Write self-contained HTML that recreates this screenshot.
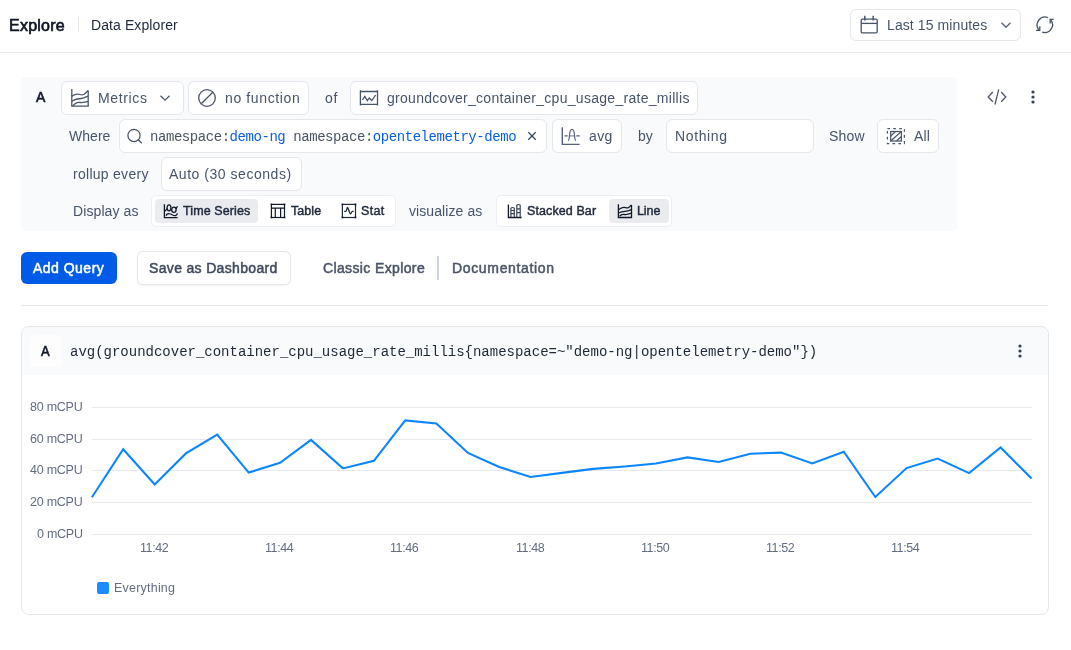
<!DOCTYPE html>
<html><head><meta charset="utf-8"><style>
html,body{margin:0;padding:0;background:#fff;width:1071px;height:650px;overflow:hidden;position:relative}
.t{position:absolute;white-space:pre;will-change:transform}
.b{position:absolute;box-sizing:border-box}
.b{box-sizing:content-box}
.i{position:absolute;overflow:visible}
</style></head><body>
<div class="t" style="left:9.20px;top:18px;font-family:'Liberation Sans', sans-serif;font-weight:400;font-size:16px;line-height:16px;color:#0e1424;letter-spacing:0.233px;-webkit-text-stroke:0.65px #0e1424">Explore</div>
<div class="b" style="left:78px;top:17px;width:0px;height:15px;background:#e5e7eb;border:none;border-radius:0px;width:1px"></div>
<div class="t" style="left:90.80px;top:18px;font-family:'Liberation Sans', sans-serif;font-weight:400;font-size:14px;line-height:14px;color:#1e293b;letter-spacing:0.095px;">Data Explorer</div>
<div class="b" style="left:0px;top:52px;width:1071px;height:0px;background:#e5e7eb;border:none;border-radius:0px;height:1px"></div>
<div class="b" style="left:850px;top:9px;width:169px;height:30px;background:#fff;border:1px solid #e4e7ec;border-radius:6px;"></div>
<svg class="i" style="left:859px;top:15px;" width="20" height="20" viewBox="0 0 20 20"><g fill="none" stroke="#475569" stroke-width="1.3"><rect x="2.2" y="4.2" width="16" height="13.6" rx="1.2"/><path d="M2.2 8.4H18.2"/><path d="M5.8 0.8V5.4M14.2 0.8V5.4" stroke-width="1.5"/></g></svg>
<div class="t" style="left:887.40px;top:18px;font-family:'Liberation Sans', sans-serif;font-weight:400;font-size:14px;line-height:14px;color:#475569;letter-spacing:0.099px;">Last 15 minutes</div>
<svg class="i" style="left:1000px;top:21px;" width="12" height="8" viewBox="0 0 12 8"><path d="M1.5 1.8L6 6.2L10.5 1.8" fill="none" stroke="#5b6779" stroke-width="1.4"/></svg>
<svg class="i" style="left:1035px;top:15px;" width="20" height="20" viewBox="0 0 20 20"><g fill="none" stroke="#475569" stroke-width="1.3"><path d="M12.9 2.6A7.9 7.9 0 0 0 3.8 14.8"/><path d="M1.1 15.4H4.8V11.3"/><path d="M7.2 17.2A7.9 7.9 0 0 0 15.8 4.8"/><path d="M18.7 4.4H15.2V8.5"/></g></svg>
<div class="b" style="left:21px;top:77px;width:936px;height:154px;background:#f8fafc;border:none;border-radius:4px;"></div>
<div class="t" style="left:35.90px;top:90px;font-family:'Liberation Sans', sans-serif;font-weight:400;font-size:14px;line-height:14px;color:#111827;letter-spacing:0.000px;-webkit-text-stroke:0.60px #111827">A</div>
<div class="b" style="left:61px;top:81px;width:121px;height:32px;background:#fff;border:1px solid #e4e7ec;border-radius:6px;"></div>
<svg class="i" style="left:70px;top:88px;" width="20" height="20" viewBox="0 0 20 20"><g fill="none" stroke="#4a5568" stroke-width="1.3"><path d="M1.8 1V18.2H18.2V2.5"/><path d="M1.8 8.2C5 6 7 5.5 10 6.5S14 6.8 18.2 2.5"/><path d="M1.8 13.3C5 11 8 10.5 11 10.5S15 9 18.2 8.2"/><path d="M2.8 18.2C5 15 7 14 10 14.5S15 14 18.2 13.3"/></g></svg>
<div class="t" style="left:98.00px;top:91px;font-family:'Liberation Sans', sans-serif;font-weight:400;font-size:14px;line-height:14px;color:#475569;letter-spacing:0.646px;">Metrics</div>
<svg class="i" style="left:159px;top:94px;" width="12" height="8" viewBox="0 0 12 8"><path d="M1.5 1.8L6 6.2L10.5 1.8" fill="none" stroke="#4a5568" stroke-width="1.25"/></svg>
<div class="b" style="left:188px;top:81px;width:119px;height:32px;background:#fff;border:1px solid #e4e7ec;border-radius:6px;"></div>
<svg class="i" style="left:197px;top:88px;" width="20" height="20" viewBox="0 0 20 20"><g fill="none" stroke="#4a5568" stroke-width="1.3"><circle cx="10" cy="10" r="8.3"/><path d="M4.2 15.8L15.8 4.2"/></g></svg>
<div class="t" style="left:224.70px;top:91px;font-family:'Liberation Sans', sans-serif;font-weight:400;font-size:14px;line-height:14px;color:#475569;letter-spacing:0.620px;">no function</div>
<div class="t" style="left:324.70px;top:91px;font-family:'Liberation Sans', sans-serif;font-weight:400;font-size:14px;line-height:14px;color:#475569;letter-spacing:0.750px;">of</div>
<div class="b" style="left:350px;top:81px;width:346px;height:32px;background:#fff;border:1px solid #e4e7ec;border-radius:6px;"></div>
<svg class="i" style="left:358px;top:89px;" width="22" height="18" viewBox="0 0 22 18"><g fill="none" stroke="#475569" stroke-width="1.3"><path d="M2.4 1.2V16.5M19.5 1.2V16.5"/><path d="M2.4 2.5H19.5M2.4 15.3H19.5"/><path d="M4.4 11L6.8 7.5L9.3 11.6L11.3 9L13.8 11.5L17.6 6" stroke-width="1.3"/></g></svg>
<div class="t" style="left:386.80px;top:91px;font-family:'Liberation Sans', sans-serif;font-weight:400;font-size:14px;line-height:14px;color:#475569;letter-spacing:0.288px;">groundcover_container_cpu_usage_rate_millis</div>
<svg class="i" style="left:986px;top:88px;" width="22" height="18" viewBox="0 0 22 18"><g fill="none" stroke="#4a5568" stroke-width="1.25"><path d="M6.8 4L2.2 9L6.8 13.8"/><path d="M15.2 4L19.8 9L15.2 13.8"/><path d="M12.7 1.3L9 16.5"/></g></svg>
<svg class="i" style="left:1030px;top:89px;" width="6" height="16" viewBox="0 0 6 16"><g fill="#334155"><circle cx="3" cy="3" r="1.6"/><circle cx="3" cy="8" r="1.6"/><circle cx="3" cy="13" r="1.6"/></g></svg>
<div class="t" style="left:69.10px;top:129px;font-family:'Liberation Sans', sans-serif;font-weight:400;font-size:14px;line-height:14px;color:#475569;letter-spacing:0.038px;">Where</div>
<div class="b" style="left:119px;top:119px;width:426px;height:32px;background:#fff;border:1px solid #e4e7ec;border-radius:6px;"></div>
<svg class="i" style="left:126px;top:127px;" width="18" height="18" viewBox="0 0 18 18"><g fill="none" stroke="#4a5568" stroke-width="1.25"><circle cx="8" cy="8.4" r="6.1"/><path d="M12.4 12.8L15.8 16.2"/></g></svg>
<div class="t" style="left:150.20px;top:130px;font-family:'Liberation Mono', monospace;font-weight:400;font-size:14px;line-height:14px;color:#4b5563;letter-spacing:-0.443px;">namespace:<span style="color:#0b5fe3">demo-ng</span> namespace:<span style="color:#0b5fe3">opentelemetry-demo</span></div>
<svg class="i" style="left:525px;top:130px;" width="14" height="13" viewBox="0 0 14 13"><path d="M3.3 2.1L10.7 9.7M10.7 2.1L3.3 9.7" fill="none" stroke="#334155" stroke-width="1.3"/></svg>
<div class="b" style="left:552px;top:119px;width:68px;height:32px;background:#fff;border:1px solid #e4e7ec;border-radius:6px;"></div>
<svg class="i" style="left:560px;top:126px;" width="22" height="20" viewBox="0 0 22 20"><g fill="none" stroke="#56637a" stroke-width="1.4"><path d="M2.3 1.2V18.4H19.6"/><path d="M4.5 9.9H7.7M16.3 9.9H19.8" stroke-width="1.3"/><path d="M8.2 14.6C9 14.2 9.3 12.5 9.5 9C9.8 4.6 10.6 3.3 12 3.3S14.2 4.6 14.5 9C14.7 12.5 15 14.2 15.8 14.6" stroke-width="1.2"/><path d="M9.6 9.9H14.4" stroke-width="0.9"/></g></svg>
<div class="t" style="left:589.10px;top:129px;font-family:'Liberation Sans', sans-serif;font-weight:400;font-size:14px;line-height:14px;color:#475569;letter-spacing:0.419px;">avg</div>
<div class="t" style="left:638.10px;top:129px;font-family:'Liberation Sans', sans-serif;font-weight:400;font-size:14px;line-height:14px;color:#475569;letter-spacing:0.087px;">by</div>
<div class="b" style="left:666px;top:119px;width:146px;height:32px;background:#fff;border:1px solid #e4e7ec;border-radius:6px;"></div>
<div class="t" style="left:674.80px;top:129px;font-family:'Liberation Sans', sans-serif;font-weight:400;font-size:14px;line-height:14px;color:#475569;letter-spacing:0.625px;">Nothing</div>
<div class="t" style="left:828.90px;top:129px;font-family:'Liberation Sans', sans-serif;font-weight:400;font-size:14px;line-height:14px;color:#475569;letter-spacing:0.192px;">Show</div>
<div class="b" style="left:877px;top:119px;width:60px;height:32px;background:#fff;border:1px solid #e4e7ec;border-radius:6px;"></div>
<svg class="i" style="left:885px;top:126px;" width="22" height="20" viewBox="0 0 22 20"><g fill="none" stroke="#4a5568" stroke-width="1.25"><rect x="2.4" y="2.5" width="17" height="15" stroke-dasharray="2.6 3.3"/><rect x="5.7" y="5.5" width="10.7" height="9.5"/><path d="M5.7 15L16.4 5.5M5.7 10L10.5 5.5M11.5 15L16.4 10.5" stroke-width="1.2"/></g></svg>
<div class="t" style="left:913.70px;top:129px;font-family:'Liberation Sans', sans-serif;font-weight:400;font-size:14px;line-height:14px;color:#475569;letter-spacing:0.169px;">All</div>
<div class="t" style="left:72.90px;top:167px;font-family:'Liberation Sans', sans-serif;font-weight:400;font-size:14px;line-height:14px;color:#475569;letter-spacing:0.275px;">rollup every</div>
<div class="b" style="left:161px;top:157px;width:139px;height:32px;background:#fff;border:1px solid #e4e7ec;border-radius:6px;"></div>
<div class="t" style="left:169.10px;top:167px;font-family:'Liberation Sans', sans-serif;font-weight:400;font-size:14px;line-height:14px;color:#475569;letter-spacing:0.530px;">Auto (30 seconds)</div>
<div class="t" style="left:72.90px;top:204px;font-family:'Liberation Sans', sans-serif;font-weight:400;font-size:14px;line-height:14px;color:#475569;letter-spacing:0.093px;">Display as</div>
<div class="b" style="left:151px;top:195px;width:243px;height:30px;background:#fff;border:1px solid #eceef2;border-radius:5px;"></div>
<div class="b" style="left:155px;top:199px;width:103px;height:24px;background:#e9ebef;border:none;border-radius:4px;"></div>
<svg class="i" style="left:162px;top:203px;" width="18" height="16" viewBox="0 0 18 16"><g fill="none" stroke="#111827" stroke-width="1.3"><path d="M2.4 1.2V14.6H15.6"/><ellipse cx="7" cy="4.8" rx="1.9" ry="3"/><ellipse cx="11.9" cy="6.8" rx="2.2" ry="2.6"/><path d="M2.4 8.6L5.3 5.6M14 6L15.4 3.2"/><path d="M4 12.6C5 10.6 6.5 10.2 8.5 11S12 13 13.5 12.6S15 11 15.5 10.4"/></g></svg>
<div class="t" style="left:182.80px;top:205px;font-family:'Liberation Sans', sans-serif;font-weight:400;font-size:12.5px;line-height:12.5px;color:#1e293b;letter-spacing:0.100px;-webkit-text-stroke:0.45px #1e293b">Time Series</div>
<svg class="i" style="left:269px;top:202px;" width="18" height="18" viewBox="0 0 18 18"><g fill="none" stroke="#111827" stroke-width="1.2"><rect x="2.4" y="2.4" width="13.1" height="13.1"/><path d="M2.4 6.1H15.5M6.3 6.1V15.5M11.6 6.1V15.5"/></g><g fill="#111827"><rect x="1.6" y="1.6" width="1.6" height="1.6"/><rect x="14.7" y="1.6" width="1.6" height="1.6"/><rect x="1.6" y="14.7" width="1.6" height="1.6"/><rect x="14.7" y="14.7" width="1.6" height="1.6"/></g></svg>
<div class="t" style="left:290.60px;top:205px;font-family:'Liberation Sans', sans-serif;font-weight:400;font-size:12.5px;line-height:12.5px;color:#1e293b;letter-spacing:0.069px;-webkit-text-stroke:0.45px #1e293b">Table</div>
<svg class="i" style="left:340px;top:202px;" width="18" height="18" viewBox="0 0 18 18"><g fill="none" stroke="#1f2937" stroke-width="1.2"><rect x="2.4" y="2.4" width="13.1" height="13.1"/><path d="M4.2 9.4H6C6.8 9.4 6.9 5.3 7.5 5.3C8.3 5.3 9.5 11.9 10.6 11.9C11.5 11.9 11.4 9.4 12.3 9.4H13.7" stroke-width="1.3"/></g><g fill="#111827"><rect x="1.6" y="1.6" width="1.7" height="1.7"/><rect x="14.6" y="1.6" width="1.7" height="1.7"/><rect x="1.6" y="14.6" width="1.7" height="1.7"/><rect x="14.6" y="14.6" width="1.7" height="1.7"/></g></svg>
<div class="t" style="left:361.10px;top:205px;font-family:'Liberation Sans', sans-serif;font-weight:400;font-size:12.5px;line-height:12.5px;color:#1e293b;letter-spacing:0.300px;-webkit-text-stroke:0.45px #1e293b">Stat</div>
<div class="t" style="left:408.90px;top:204px;font-family:'Liberation Sans', sans-serif;font-weight:400;font-size:14px;line-height:14px;color:#475569;letter-spacing:0.084px;">visualize as</div>
<div class="b" style="left:496px;top:195px;width:174px;height:30px;background:#fff;border:1px solid #eceef2;border-radius:5px;"></div>
<div class="b" style="left:609px;top:199px;width:60px;height:24px;background:#e9ebef;border:none;border-radius:4px;"></div>
<svg class="i" style="left:506px;top:202px;" width="18" height="18" viewBox="0 0 18 18"><g fill="none" stroke="#111827" stroke-width="1.3"><path d="M2.4 2.4V15.5H15.6"/></g><g fill="none" stroke="#374151" stroke-width="1.2"><path d="M4.9 15V6.2Q6.6 4.8 8.3 6.2V15M4.9 8.5H8.3M4.9 11.6H8.3"/><path d="M10.8 15V3.2Q12.5 1.8 14.2 3.2V15M10.8 6.8H14.2M10.8 10.6H14.2"/></g></svg>
<div class="t" style="left:526.70px;top:205px;font-family:'Liberation Sans', sans-serif;font-weight:400;font-size:12.5px;line-height:12.5px;color:#1e293b;letter-spacing:0.099px;-webkit-text-stroke:0.45px #1e293b">Stacked Bar</div>
<svg class="i" style="left:616px;top:202px;" width="18" height="18" viewBox="0 0 18 18"><g fill="none" stroke="#111827" stroke-width="1.3"><path d="M2.4 2.2V15.5H15.5V3"/><path d="M2.8 7.5C5 6 6.5 5.2 8 5.3S10.5 6.3 12 5.8S14 4 15.5 3"/><path d="M2.6 11C5 9.6 7 9.2 9 9.3S13 8.6 15.5 7.6"/><path d="M3.6 14.2C5 12.5 6.5 12 8.5 12.5S12.5 12.3 15.5 11.2"/></g></svg>
<div class="t" style="left:636.60px;top:205px;font-family:'Liberation Sans', sans-serif;font-weight:400;font-size:12.5px;line-height:12.5px;color:#1e293b;letter-spacing:-0.092px;-webkit-text-stroke:0.45px #1e293b">Line</div>
<div class="b" style="left:21px;top:252px;width:96px;height:32px;background:#005ce6;border:none;border-radius:6px;"></div>
<div class="t" style="left:33.00px;top:261px;font-family:'Liberation Sans', sans-serif;font-weight:400;font-size:14px;line-height:14px;color:#ffffff;letter-spacing:0.483px;-webkit-text-stroke:0.50px #ffffff">Add Query</div>
<div class="b" style="left:137px;top:251px;width:152px;height:32px;background:#fff;border:1px solid #e4e7ec;border-radius:6px;box-shadow:0 1px 2px rgba(16,24,40,0.05)"></div>
<div class="t" style="left:149.20px;top:261px;font-family:'Liberation Sans', sans-serif;font-weight:400;font-size:14px;line-height:14px;color:#3f4b5e;letter-spacing:0.335px;-webkit-text-stroke:0.50px #3f4b5e">Save as Dashboard</div>
<div class="t" style="left:323.20px;top:261px;font-family:'Liberation Sans', sans-serif;font-weight:400;font-size:14px;line-height:14px;color:#4b5567;letter-spacing:0.371px;-webkit-text-stroke:0.50px #4b5567">Classic Explore</div>
<div class="b" style="left:437px;top:256px;width:1px;height:0px;background:#cfd5de;border:none;border-radius:0px;height:24px;width:2px"></div>
<div class="t" style="left:452.20px;top:261px;font-family:'Liberation Sans', sans-serif;font-weight:400;font-size:14px;line-height:14px;color:#4b5567;letter-spacing:0.659px;-webkit-text-stroke:0.50px #4b5567">Documentation</div>
<div class="b" style="left:21px;top:305px;width:1027px;height:0px;background:#e5e7eb;border:none;border-radius:0px;height:1px"></div>
<div class="b" style="left:21px;top:326px;width:1026px;height:287px;background:#fff;border:1px solid #e5e7eb;border-radius:8px;overflow:hidden"></div>
<div class="b" style="left:22px;top:327px;width:1026px;height:48px;background:#f8fafc;border:none;border-radius:0px;border-radius:8px 8px 0 0"></div>
<div class="b" style="left:30px;top:335px;width:32px;height:32px;background:#fdfdfe;border:none;border-radius:4px;"></div>
<div class="t" style="left:40.80px;top:345px;font-family:'Liberation Mono', monospace;font-weight:400;font-size:14.5px;line-height:14.5px;color:#111827;letter-spacing:0.000px;-webkit-text-stroke:0.50px #111827">A</div>
<div class="t" style="left:70.30px;top:345px;font-family:'Liberation Mono', monospace;font-weight:400;font-size:14px;line-height:14px;color:#1f2937;letter-spacing:-0.006px;">avg(groundcover_container_cpu_usage_rate_millis{namespace=~"demo-ng|opentelemetry-demo"})</div>
<svg class="i" style="left:1017px;top:343px;" width="6" height="16" viewBox="0 0 6 16"><g fill="#334155"><circle cx="3" cy="3" r="1.6"/><circle cx="3" cy="8" r="1.6"/><circle cx="3" cy="13" r="1.6"/></g></svg>
<div class="b" style="left:92px;top:406.9px;width:940px;height:1px;background:#e7e9ee"></div>
<div class="b" style="left:92px;top:438.7px;width:940px;height:1px;background:#e7e9ee"></div>
<div class="b" style="left:92px;top:470.1px;width:940px;height:1px;background:#e7e9ee"></div>
<div class="b" style="left:92px;top:501.7px;width:940px;height:1px;background:#e7e9ee"></div>
<div class="b" style="left:92px;top:533.5px;width:940px;height:1px;background:#e7e9ee"></div>
<div class="t" style="left:29.91px;top:401px;font-family:'Liberation Sans', sans-serif;font-weight:400;font-size:12.5px;line-height:12.5px;color:#636d80;letter-spacing:-0.250px;">80 mCPU</div>
<div class="t" style="left:29.91px;top:433px;font-family:'Liberation Sans', sans-serif;font-weight:400;font-size:12.5px;line-height:12.5px;color:#636d80;letter-spacing:-0.250px;">60 mCPU</div>
<div class="t" style="left:29.91px;top:464px;font-family:'Liberation Sans', sans-serif;font-weight:400;font-size:12.5px;line-height:12.5px;color:#636d80;letter-spacing:-0.250px;">40 mCPU</div>
<div class="t" style="left:29.91px;top:496px;font-family:'Liberation Sans', sans-serif;font-weight:400;font-size:12.5px;line-height:12.5px;color:#636d80;letter-spacing:-0.250px;">20 mCPU</div>
<div class="t" style="left:36.60px;top:528px;font-family:'Liberation Sans', sans-serif;font-weight:400;font-size:12.5px;line-height:12.5px;color:#636d80;letter-spacing:-0.250px;">0 mCPU</div>
<div class="t" style="left:139.61px;top:542px;font-family:'Liberation Sans', sans-serif;font-weight:400;font-size:12.5px;line-height:12.5px;color:#636d80;letter-spacing:-0.400px;">11:42</div>
<div class="t" style="left:264.91px;top:542px;font-family:'Liberation Sans', sans-serif;font-weight:400;font-size:12.5px;line-height:12.5px;color:#636d80;letter-spacing:-0.400px;">11:44</div>
<div class="t" style="left:390.21px;top:542px;font-family:'Liberation Sans', sans-serif;font-weight:400;font-size:12.5px;line-height:12.5px;color:#636d80;letter-spacing:-0.400px;">11:46</div>
<div class="t" style="left:515.51px;top:542px;font-family:'Liberation Sans', sans-serif;font-weight:400;font-size:12.5px;line-height:12.5px;color:#636d80;letter-spacing:-0.400px;">11:48</div>
<div class="t" style="left:640.81px;top:542px;font-family:'Liberation Sans', sans-serif;font-weight:400;font-size:12.5px;line-height:12.5px;color:#636d80;letter-spacing:-0.400px;">11:50</div>
<div class="t" style="left:766.11px;top:542px;font-family:'Liberation Sans', sans-serif;font-weight:400;font-size:12.5px;line-height:12.5px;color:#636d80;letter-spacing:-0.400px;">11:52</div>
<div class="t" style="left:891.41px;top:542px;font-family:'Liberation Sans', sans-serif;font-weight:400;font-size:12.5px;line-height:12.5px;color:#636d80;letter-spacing:-0.400px;">11:54</div>
<svg class="i" style="left:0;top:0" width="1071" height="650"><path d="M91.9 497.2 L123.2 449.2 L154.7 484.4 L185.9 453.4 L217.2 434.5 L248.7 472.6 L280.0 462.8 L311.0 439.9 L342.9 468.4 L373.9 460.8 L405.2 420.4 L436.4 423.4 L467.9 452.9 L499.2 467.0 L530.5 477.0 L561.9 472.9 L593.2 468.9 L624.7 466.5 L656.0 463.5 L687.5 457.4 L718.7 462.0 L750.3 453.7 L781.0 452.6 L812.3 463.5 L843.8 451.7 L875.3 497.0 L906.6 468.1 L937.6 458.5 L969.1 473.1 L1000.6 447.4 L1031.6 478.6" fill="none" stroke="#0c86ff" stroke-width="2.1" stroke-linejoin="miter"/></svg>
<div class="b" style="left:97px;top:582px;width:12px;height:12px;background:#1a8cff;border:none;border-radius:2px;"></div>
<div class="t" style="left:114.20px;top:582px;font-family:'Liberation Sans', sans-serif;font-weight:400;font-size:12.5px;line-height:12.5px;color:#636d80;letter-spacing:0.215px;">Everything</div>
</body></html>
